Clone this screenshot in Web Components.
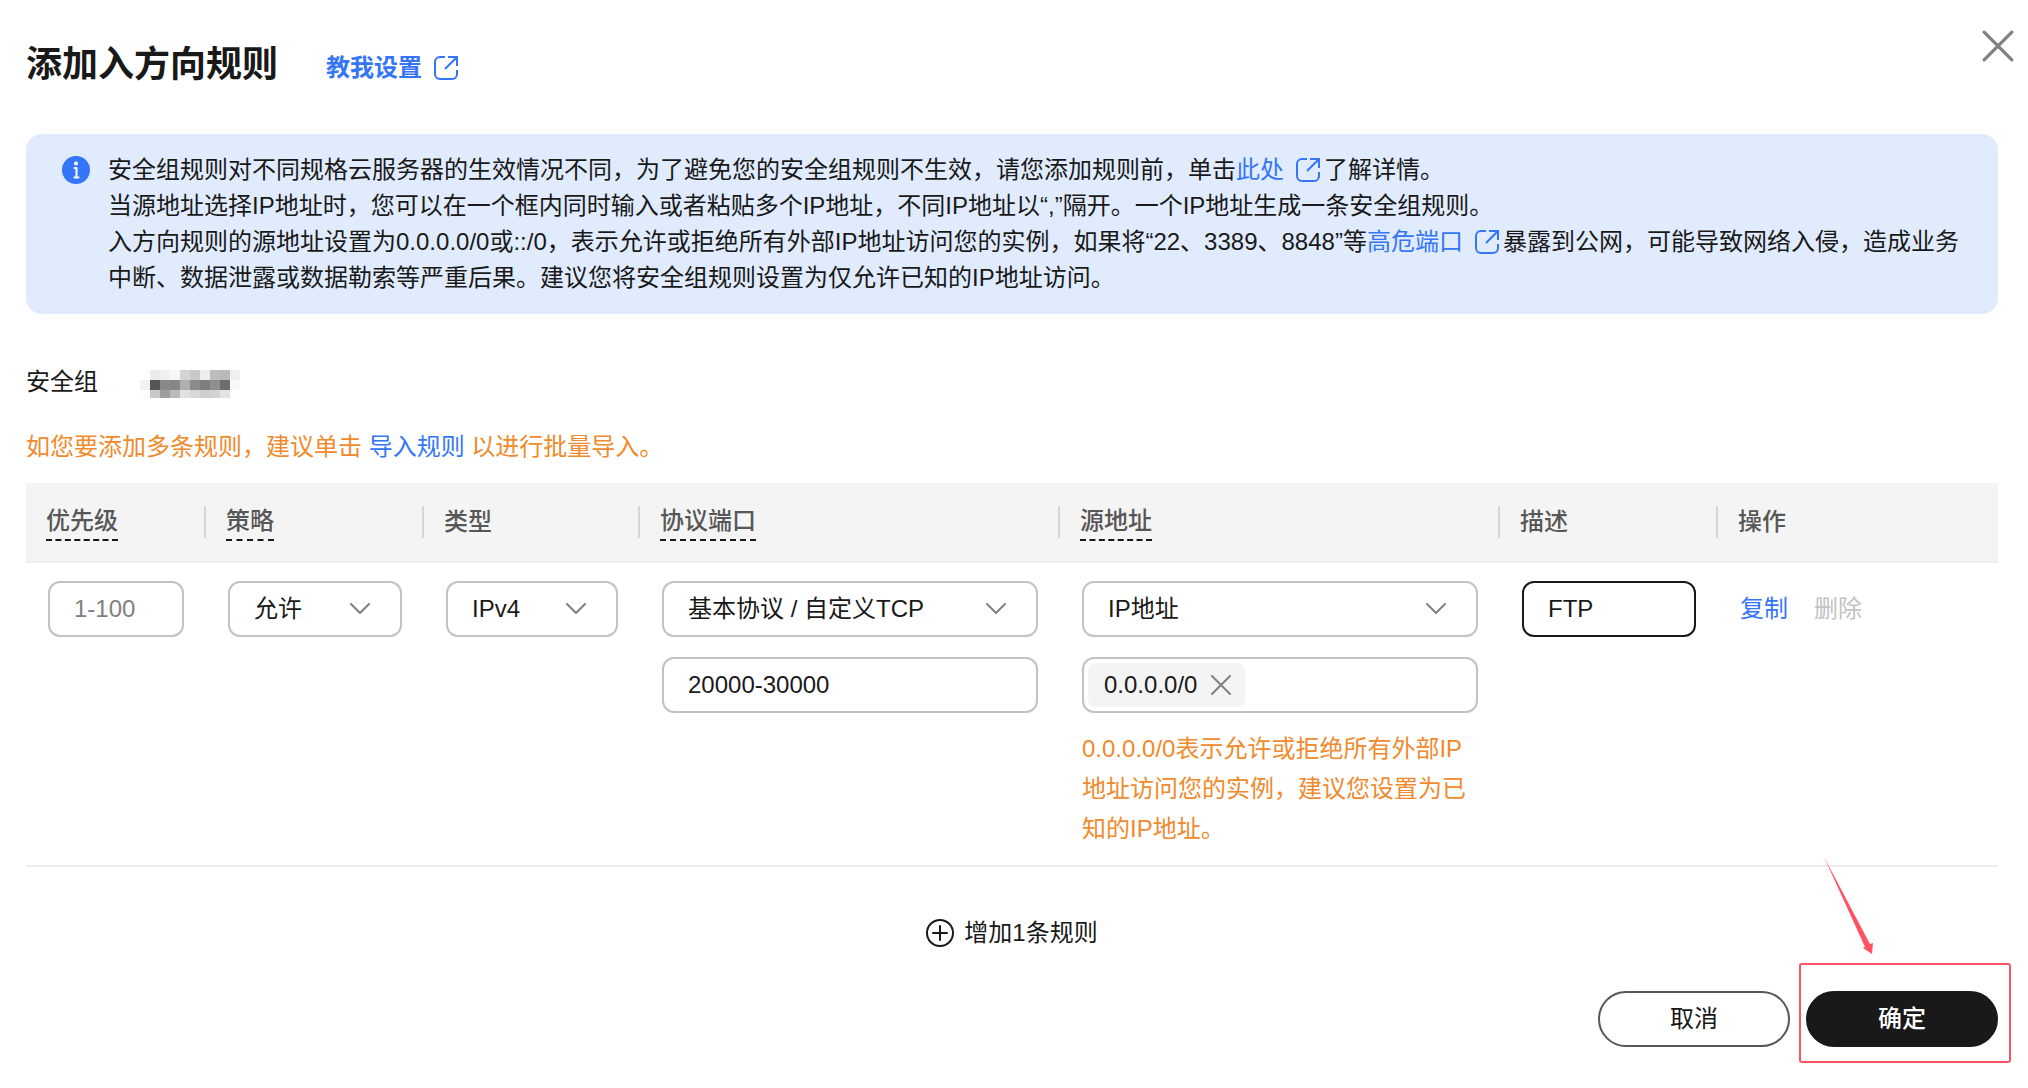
<!DOCTYPE html>
<html lang="zh-CN">
<head>
<meta charset="utf-8">
<title>添加入方向规则</title>
<style>
  :root {
    --ink: #191919;
    --link: #3476f7;
    --warn: #f08a2c;
    --line: #c2c2c2;
    --muted: #808080;
    --head: #575757;
    --mark: #ff5364;
  }
  body {
    margin: 0;
    background: #fff;
    color: var(--ink);
    font: 24px/36px "Liberation Sans", "Noto Sans CJK SC", sans-serif;
  }
</style>
</head>
<body>
<rule-dialog></rule-dialog>

<script>
const define = (name, html, setup) => {
  const tpl = document.createElement('template');
  tpl.innerHTML = html.trim();
  customElements.define(name, class extends HTMLElement {
    constructor() {
      super();
      this.attachShadow({ mode: 'open' }).append(tpl.content.cloneNode(true));
    }
    connectedCallback() { if (setup) setup(this, this.shadowRoot); }
  });
};

const ICONS = {
  external: ['0 0 24 24', '<g stroke-linecap="butt" stroke-linejoin="miter"><path d="M11 1H6a5 5 0 0 0-5 5v12a5 5 0 0 0 5 5h12a5 5 0 0 0 5-5v-4" /><path d="M14 1h9v9M23 1 11 13" /></g>', 2],
  close: ['0 0 30 30', '<path d="M2 2 28 28M28 2 2 28" />', 3],
  remove: ['0 0 20 20', '<path d="M1 1 19 19M19 1 1 19" />', 2],
  chevron: ['0 0 20 12', '<path d="M1 1 10 10 19 1" />', 2],
  plus: ['0 0 28 28', '<circle cx="14" cy="14" r="13" /><path d="M14 7v14M7 14h14" />', 2],
  info: ['0 0 28 28', '<circle cx="14" cy="14" r="14" fill="currentColor" stroke="none" /><circle cx="14" cy="7.500" r="2" fill="#fff" stroke="none" /><path d="M12.500 12H14.500V21.500M12.500 21.500H16.500" stroke="#fff" />', 2],
};
define('ui-icon', `
  <style>
    :host { display: inline-block; flex: none; width: 24px; height: 24px; line-height: 0; }
    svg { display: block; width: 100%; height: 100%; }
  </style>
  <svg fill="none" stroke="currentColor" stroke-linecap="round" stroke-linejoin="round" aria-hidden="true"></svg>`,
  (el, root) => {
    const [box, shape, width] = ICONS[el.getAttribute('name')];
    const svg = root.querySelector('svg');
    svg.setAttribute('viewBox', box);
    svg.setAttribute('stroke-width', width);
    svg.innerHTML = shape;
  });

define('ui-link', `
  <style>
    :host { display: inline; }
    a { color: var(--link); text-decoration: none; }
    ui-icon { display: none; margin-left: 12px; margin-right: 4px; vertical-align: -4px; }
    :host([external]) ui-icon { display: inline-block; }
  </style><a href="#"><slot></slot><ui-icon name="external"></ui-icon></a>`);

define('ui-alert', `
  <style>
    :host { display: flex; gap: 18px; padding: 18px 30px 18px 36px; border-radius: 16px; background: #e0ebfd; }
    ui-icon { width: 28px; height: 28px; margin-top: 4px; color: var(--link); }
    div { flex: 1; min-width: 0; }
  </style>
  <ui-icon name="info"></ui-icon><div><slot></slot></div>`);

define('masked-value', `
  <style>
    :host { display: block; width: 100px; height: 28px; margin-top: 4px; }
    svg { display: block; }
  </style>
  <svg width="100" height="28" shape-rendering="crispEdges" aria-hidden="true"></svg>`,
  (el, root) => {
    const rows = [
      ['fff', 'ececec', 'f1f1f1', 'f7f7f7', 'd4d4d4', 'c9c9c9', 'ededed', 'bdbdbd', 'b9b9b9', 'efefef'],
      ['f1f1f1', '555', '898989', '868686', 'afafaf', '8b8b8b', '7d7d7d', '8f8f8f', '6d6d6d', 'f8f8f8'],
      ['fdfdfd', 'c8c8c8', '9f9f9f', 'bababa', 'e1e1e1', 'd8d8d8', 'cfcfcf', 'd3d3d3', 'e3e3e3', 'fff'],
    ];
    root.querySelector('svg').innerHTML = rows.map((row, y) => row.map((c, x) =>
      `<rect x="${x * 10}" y="${y * 10}" width="10" height="10" fill="#${c}" />`).join('')).join('');
  });

const FIELD = `
    :host { display: block; }
    input, select {
      box-sizing: border-box; width: 100%; height: 56px; margin: 0; padding: 0 24px;
      border: 2px solid var(--line); border-radius: 12px; background: #fff;
      color: var(--ink); font: inherit; outline: none; appearance: none;
    }`;

define('ui-input', `
  <style>${FIELD}
    input::placeholder { color: var(--muted); opacity: 1; }
    :host([active]) input { border-color: var(--ink); }
  </style>
  <input type="text">`,
  (el, root) => {
    const input = root.querySelector('input');
    input.value = el.getAttribute('value') || '';
    input.placeholder = el.getAttribute('placeholder') || '';
    input.setAttribute('aria-label', el.getAttribute('label'));
  });

define('ui-select', `
  <style>${FIELD}
    div { display: grid; align-items: center; }
    select, ui-icon { grid-area: 1 / 1; }
    select { padding-right: 60px; }
    ui-icon { width: 20px; height: 12px; margin-right: 32px; justify-self: end; color: var(--muted); pointer-events: none; }
  </style>
  <div><select></select><ui-icon name="chevron"></ui-icon></div>`,
  (el, root) => {
    const select = root.querySelector('select');
    select.add(new Option(el.getAttribute('value')));
    select.setAttribute('aria-label', el.getAttribute('label'));
  });

define('tag-input', `
  <style>
    :host { display: flex; box-sizing: border-box; height: 56px; padding: 4px; border: 2px solid var(--line); border-radius: 12px; }
    span { display: flex; align-items: center; gap: 14px; padding: 0 14px 0 16px; border-radius: 8px; background: #f4f4f4; }
    button { display: flex; padding: 0; border: 0; background: none; color: var(--muted); }
    ui-icon { width: 20px; height: 20px; }
    input { flex: 1; min-width: 0; padding: 0 8px; border: 0; outline: none; background: none; font: inherit; }
  </style>
  <span><slot></slot><button type="button" aria-label="移除"><ui-icon name="remove"></ui-icon></button></span>
  <input type="text" aria-label="源地址">`);

define('ui-button', `
  <style>
    :host { display: block; }
    button {
      box-sizing: border-box; width: 192px; height: 56px; padding: 0;
      border: 2px solid var(--head); border-radius: 28px; background: #fff; color: var(--ink); font: inherit;
    }
    :host([primary]) button { border-color: var(--ink); background: var(--ink); color: #fff; font-weight: 500; }
  </style>
  <button type="button"><slot></slot></button>`);

define('text-button', `
  <style>
    :host { display: inline-block; }
    button { display: flex; align-items: center; gap: 10px; padding: 0; border: 0; background: none; color: inherit; font: inherit; }
  </style>
  <button type="button"><slot></slot></button>`,
  (el, root) => { root.querySelector('button').disabled = el.hasAttribute('disabled'); });

define('click-marker', `
  <style>
    :host { display: block; position: relative; }
    .frame { position: absolute; inset: -28px -13px -16px -7px; border: 2px solid var(--mark); border-radius: 3px; pointer-events: none; }
    svg { position: absolute; left: 17px; bottom: 92px; pointer-events: none; }
  </style>
  <slot></slot>
  <div class="frame"></div>
  <svg width="52" height="98" viewBox="0 0 52 98" aria-hidden="true">
    <path d="M1 0 47 87 50 86 49 97 40 91 42 90Z" fill="#ff5364" />
  </svg>`);

define('rule-table', `
  <style>
    :host { display: block; }
    table { width: 100%; table-layout: fixed; border-collapse: separate; border-spacing: 0; }
    th { height: 78px; padding: 0; border-bottom: 2px solid #ededed; background: #f4f4f4; color: var(--head); font-weight: 500; text-align: left; }
    th div { display: flex; align-items: center; height: 32px; padding-left: 20px; border-right: 2px solid #d6d6d6; }
    th:last-child div { border-right-color: transparent; }
    .tip { border-bottom: 2px dashed var(--ink); }
    td { padding: 18px 22px 16px; border-bottom: 2px solid #ededed; vertical-align: top; }
    .stack { display: flex; flex-direction: column; gap: 20px; }
    p { margin: 16px 0 0; color: var(--warn); line-height: 40px; }
    .actions { display: flex; align-items: center; gap: 26px; height: 56px; }
    .copy { color: var(--link); }
    .delete { color: var(--line); }
    .c1 { width: 180px; } .c2 { width: 218px; } .c3 { width: 216px; } .c4 { width: 420px; }
    .c5 { width: 440px; } .c6 { width: 218px; } .c7 { width: 280px; }
  </style>
  <table>
    <colgroup><col class="c1"><col class="c2"><col class="c3"><col class="c4"><col class="c5"><col class="c6"><col class="c7"></colgroup>
    <thead><tr>
      <th scope="col"><div><span class="tip">优先级</span></div></th>
      <th scope="col"><div><span class="tip">策略</span></div></th>
      <th scope="col"><div>类型</div></th>
      <th scope="col"><div><span class="tip">协议端口</span></div></th>
      <th scope="col"><div><span class="tip">源地址</span></div></th>
      <th scope="col"><div>描述</div></th>
      <th scope="col"><div>操作</div></th>
    </tr></thead>
    <tbody><tr>
      <td><ui-input label="优先级" placeholder="1-100"></ui-input></td>
      <td><ui-select label="策略" value="允许"></ui-select></td>
      <td><ui-select label="类型" value="IPv4"></ui-select></td>
      <td><div class="stack"><ui-select label="协议" value="基本协议 / 自定义TCP"></ui-select><ui-input label="端口" value="20000-30000"></ui-input></div></td>
      <td>
        <div class="stack"><ui-select label="源地址类型" value="IP地址"></ui-select><tag-input>0.0.0.0/0</tag-input></div>
        <p>0.0.0.0/0表示允许或拒绝所有外部IP地址访问您的实例，建议您设置为已知的IP地址。</p>
      </td>
      <td><ui-input label="描述" value="FTP" active></ui-input></td>
      <td><div class="actions"><text-button class="copy">复制</text-button><text-button class="delete" disabled>删除</text-button></div></td>
    </tr></tbody>
  </table>`);

define('rule-dialog', `
  <style>
    :host { display: block; padding: 30px 30px 40px 26px; }
    header { display: flex; align-items: flex-start; height: 104px; }
    h1 { margin: 8px 48px 0 0; font-size: 36px; line-height: 54px; font-weight: 700; }
    header ui-link { margin-top: 20px; font-weight: 700; }
    .close { display: flex; margin: 0 -16px 0 auto; padding: 0; border: 0; background: none; color: var(--muted); }
    .close ui-icon { width: 32px; height: 32px; }
    .group { display: flex; align-items: center; gap: 42px; margin-top: 50px; }
    .hint { margin: 29px 0 18px; color: var(--warn); }
    .add { display: flex; justify-content: center; margin: 48px 0 40px; }
    .add ui-icon { width: 28px; height: 28px; }
    footer { display: flex; justify-content: flex-end; gap: 16px; }
  </style>
  <header>
    <h1>添加入方向规则</h1>
    <ui-link external>教我设置</ui-link>
    <button class="close" type="button" aria-label="关闭"><ui-icon name="close"></ui-icon></button>
  </header>
  <ui-alert>安全组规则对不同规格云服务器的生效情况不同，为了避免您的安全组规则不生效，请您添加规则前，单击<ui-link external>此处</ui-link>了解详情。<br>当源地址选择IP地址时，您可以在一个框内同时输入或者粘贴多个IP地址，不同IP地址以“,”隔开。一个IP地址生成一条安全组规则。<br>入方向规则的源地址设置为0.0.0.0/0或::/0，表示允许或拒绝所有外部IP地址访问您的实例，如果将“22、3389、8848”等<ui-link external>高危端口</ui-link>暴露到公网，可能导致网络入侵，造成业务中断、数据泄露或数据勒索等严重后果。建议您将安全组规则设置为仅允许已知的IP地址访问。</ui-alert>
  <div class="group"><span>安全组</span><masked-value></masked-value></div>
  <div class="hint">如您要添加多条规则，建议单击 <ui-link>导入规则</ui-link> 以进行批量导入。</div>
  <rule-table></rule-table>
  <div class="add"><text-button><ui-icon name="plus"></ui-icon>增加1条规则</text-button></div>
  <footer>
    <ui-button>取消</ui-button>
    <click-marker><ui-button primary>确定</ui-button></click-marker>
  </footer>`);
</script>
</body>
</html>
